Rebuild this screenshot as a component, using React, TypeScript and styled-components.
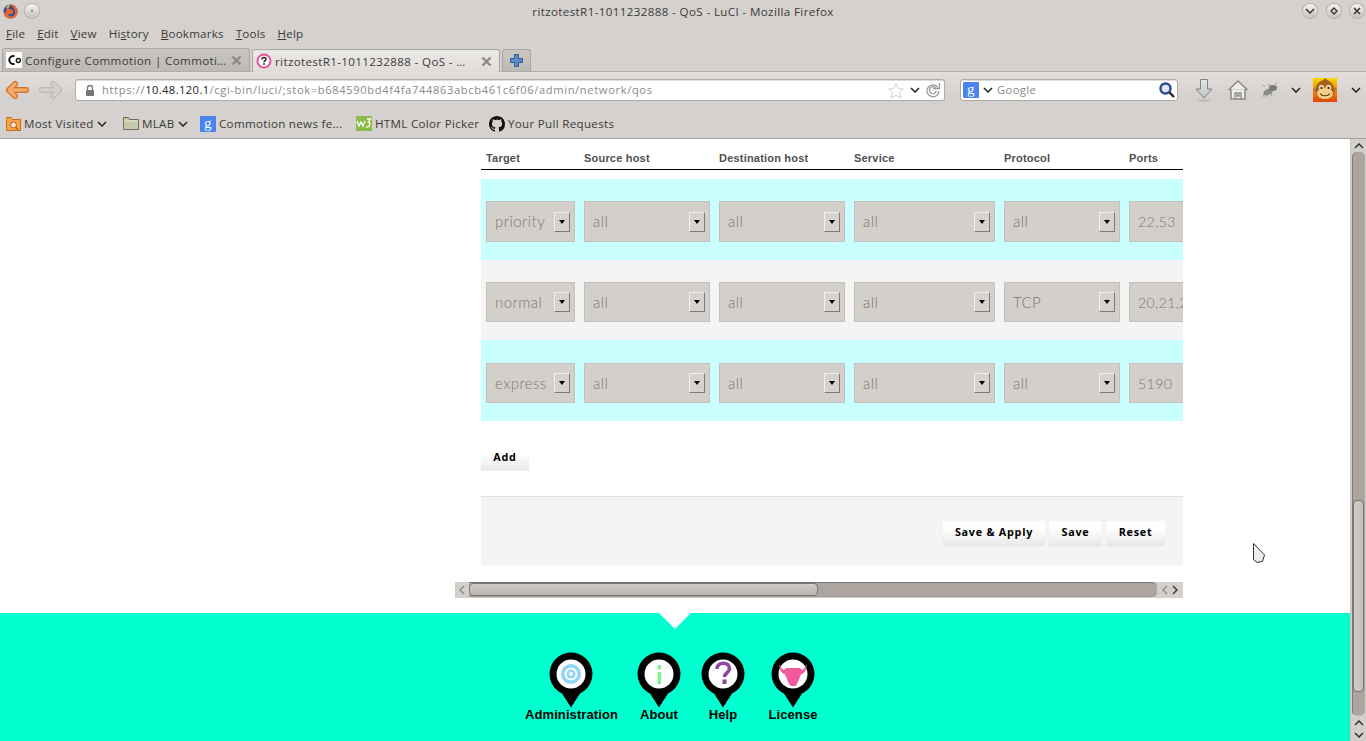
import React from "react";
import styled, { createGlobalStyle } from "styled-components";

const Global = createGlobalStyle`
  html, body { margin: 0; padding: 0; height: 741px; overflow: hidden; background: #d5d1ce; }
  * { box-sizing: border-box; }
`;

const uiFont = `"Open Sans", "Noto Sans", sans-serif`;

const Page = styled.div`
  width: 1366px; height: 741px; display: flex; flex-direction: column; position: relative; overflow: hidden;
  font-family: ${uiFont}; color: #3c3b37;
`;
const Spacer = styled.span<{ $w: number }>`width: ${p => p.$w}px; flex: none;`;

/* ---- browser chrome ---- */
const TitleBar = styled.div`
  height: 22px; display: flex; align-items: center; justify-content: space-between; padding: 0 3px 0 3px; background: #d5d1ce;
`;
const TitleText = styled.div`
  flex: 1; text-align: center; font-size: 11.6px; color: #3c3b37; letter-spacing: 0.37px;
`;
const TitleLeft = styled.div`display: flex; align-items: center; gap: 7px; width: 60px;`;
const TitleRight = styled.div`display: flex; align-items: center; gap: 9.5px; width: 60px; flex: none;`;
const Round = styled.div`
  width: 14px; height: 14px; border-radius: 50%; background: linear-gradient(#f6f5f4, #c4c0bc); box-shadow: 0 0 0 1px #b5b1ad;
  display: flex; align-items: center; justify-content: center; flex: none;
`;
const MenuBar = styled.div`
  height: 23px; display: flex; align-items: center; padding: 0 6px 1px; gap: 12px; font-size: 11.6px; color: #3c3b37; letter-spacing: 0.2px;
`;
const TabStrip = styled.div`
  height: 27px; display: flex; align-items: flex-end; padding-left: 2px; gap: 2px; border-bottom: 1px solid #b0aca8; background: #d5d1ce;
`;
const Tab = styled.div<{ $active?: boolean }>`
  width: 248px; height: 23px; display: flex; align-items: center; gap: 3px; padding: 0 6px 0 3px;
  border: 1px solid #aaa6a2; border-bottom: none; border-radius: 3px 3px 0 0; font-size: 11.6px; margin-bottom: ${p => (p.$active ? "-1px" : "0")};
  background: ${p => (p.$active ? "linear-gradient(#ebe9e7, #e0dcda)" : "linear-gradient(#c9c5c1, #bdb9b5)")};
  color: #3c3b37; white-space: nowrap;
`;
const TabLabel = styled.span`flex: 1; overflow: hidden; letter-spacing: 0.36px; line-height: 18px; padding-top: 2px;`;
const NewTab = styled.div`
  width: 29px; height: 22px; display: flex; align-items: center; justify-content: center;
  border: 1px solid #aaa6a2; border-bottom: none; border-radius: 3px 3px 0 0; background: linear-gradient(#cbc7c3, #bdb9b5);
`;
const NavBar = styled.div`
  height: 36px; display: flex; align-items: center; padding: 0 5px; background: linear-gradient(#e1dedc, #d5d1ce 70%);
`;
const BackWrap = styled.div`display: flex; align-items: center; gap: 10px; width: 70px;`;
const UrlBox = styled.div`
  width: 870px; height: 22px; background: #fff; border: 1px solid #aeaaa6; border-radius: 3px; display: flex; align-items: center; padding: 0 3px 0 8px; gap: 5px;
  font-size: 11.2px; color: #8a8a88; letter-spacing: 0.62px; box-shadow: inset 0 1px 0 #ddd;
  b { font-weight: 400; color: #222; letter-spacing: 0.4px; }
`;
const UrlText = styled.span`flex: 1; white-space: nowrap; padding: 0 0 2px 1px;`;
const SearchBox = styled.div`
  width: 218px; height: 22px; margin-left: 15px; background: #fff; border: 1px solid #aeaaa6; border-radius: 3px; display: flex; align-items: center; padding: 0 1px 0 2px;
  font-size: 11.2px; color: #8a8a88; letter-spacing: 0.4px; box-shadow: inset 0 1px 0 #ddd;
`;
const SearchText = styled.span`flex: 1; margin-left: 4px; padding-bottom: 2px;`;
const NavRight = styled.div`display: flex; align-items: center; margin-left: 16px;`;
const BookBar = styled.div`
  height: 31px; display: flex; align-items: center; padding: 1px 0 0 6px; background: #d5d1ce; border-bottom: 1px solid #a5a19d; font-size: 11.6px; letter-spacing: 0.3px; color: #3c3b37;
`;
const BookItem = styled.div<{ $w: number }>`display: flex; align-items: center; gap: 3px; width: ${p => p.$w}px; white-space: nowrap; flex: none;`;

/* ---- page ---- */
const Body = styled.div`flex: 1; display: flex; min-height: 0; background: #fff;`;
const Main = styled.div`flex: 1; display: flex; flex-direction: column; min-width: 0;`;
const Content = styled.div`height: 474px; padding-left: 455px; display: flex; flex-direction: column;`;
const Inner = styled.div`width: 728px; padding-left: 26px; display: flex; flex-direction: column; flex: none;`;
const HeadRow = styled.div`
  height: 31px; display: flex; align-items: flex-end; width: 702px; border-bottom: 1px solid #000; padding-bottom: 5px;
  font: bold 11px "Liberation Sans", Arial, sans-serif; color: #505050; margin-bottom: 9px; letter-spacing: 0.2px;
`;
const HeadCell = styled.div<{ $w: number }>`width: ${p => p.$w}px; padding-left: 5px; flex: none;`;
const Rows = styled.div`width: 702px; overflow: hidden;`;
const Row = styled.div<{ $bg: string; $h: number; $pt: number }>`
  height: ${p => p.$h}px; background: ${p => p.$bg}; display: flex; align-items: flex-start; padding-top: ${p => p.$pt}px;
`;
const Cell = styled.div<{ $w: number }>`width: ${p => p.$w}px; padding-left: 5px; flex: none;`;
const Sel = styled.div<{ $w: number; $h: number }>`
  width: ${p => p.$w}px; height: ${p => p.$h}px; background: #d3cfcb; border: 1px solid #c4c1bd; display: flex; align-items: center; padding: 0 4px 0 8px;
  font: 300 15px "Lato", "Open Sans", sans-serif; color: #7a7875; letter-spacing: 0.45px; white-space: nowrap; overflow: hidden;
`;
const SelText = styled.span`flex: 1; padding-bottom: 1px;`;
const SelBtn = styled.div`
  width: 16px; height: 20px; background: #d6d2cf; border: 1px solid; border-color: #f2f0ee #7d7a76 #7d7a76 #f2f0ee; display: flex; align-items: center; justify-content: center; flex: none;
  &::after { content: ""; border: 3.5px solid transparent; border-top: 4px solid #000; border-bottom: 0; }
`;
const Port = styled.div<{ $h: number }>`
  width: 70px; height: ${p => p.$h}px; background: #d3cfcb; border: 1px solid #c4c1bd; display: flex; align-items: center; padding: 0 0 0 8px;
  font: 300 14px "Lato", "Open Sans", sans-serif; color: #7a7875; letter-spacing: 0.45px; white-space: nowrap;
`;
const AddWrap = styled.div`padding-top: 25px; height: 75px; display: flex; align-items: flex-start;`;
const Btn = styled.button<{ $w: number }>`
  width: ${p => p.$w}px; height: 24px; border: 0; border-radius: 0; padding: 0 0 4px; background: linear-gradient(#fff 30%, #e9e9e9); box-shadow: 0 1px 1px rgba(0,0,0,0.06);
  font: bold 10.8px "Open Sans", "DejaVu Sans", sans-serif; letter-spacing: 0.75px; color: #000; flex: none; white-space: nowrap;
`;
const Actions = styled.div`
  width: 702px; height: 69px; background: #f4f4f4; border-top: 1px solid #e0e0e0; display: flex; justify-content: flex-end; padding: 24px 18px 0 0; gap: 4px;
`;
const HScroll = styled.div`
  width: 728px; height: 16px; margin-top: 17px; background: #d3cfcb; display: flex; align-items: center; flex: none;
`;
const HArrows = styled.div<{ $w: number }>`width: ${p => p.$w}px; display: flex; align-items: center; justify-content: center; gap: 4px; flex: none;`;
const HTrack = styled.div`
  flex: 1; height: 15px; margin-bottom: 1px; background: #aca5a0; border-top: 1px solid #777; border-radius: 0 5px 5px 0; display: flex; box-shadow: inset 0 -1px 0 #a09a95;
`;
const HThumb = styled.div`
  width: 349px; height: 13px; background: linear-gradient(#cfcbc7, #bbb6b1); border: 1px solid #77736f; border-radius: 4px;
`;
const Footer = styled.div`
  height: 128px; background: #00ffcf; position: relative; display: flex; justify-content: flex-start; padding-left: 525px;
`;
const Notch = styled.div`
  position: absolute; top: 0; left: 659px; width: 0; height: 0; border-left: 16px solid transparent; border-right: 16px solid transparent; border-top: 16px solid #fff;
`;
const PinItem = styled.div<{ $w: number; $ml: number }>`
  width: ${p => p.$w}px; margin-left: ${p => p.$ml}px; padding-top: 39px; display: flex; flex-direction: column; align-items: center; flex: none;
  font: bold 13px "Liberation Sans", Arial, sans-serif; color: #000; white-space: nowrap;
  svg { margin-left: -1px; }
`;
const PinLabel = styled.div`margin-top: -1px; line-height: 15px; letter-spacing: 0.1px;`;

const VScroll = styled.div`
  width: 16px; background: #d3cfcb; display: flex; flex-direction: column; align-items: center; flex: none; border-left: 1px solid #c8c4c0;
`;
const VArrow = styled.div<{ $h: number }>`height: ${p => p.$h}px; display: flex; align-items: center; justify-content: center; flex: none;`;
const VTrack = styled.div`
  height: 564px; flex: none; width: 13px; background: #aca5a0; border-radius: 5px; padding-top: 348px; display: flex; flex-direction: column; border-left: 1px solid #7f7a75; border-bottom: 1px solid #bbb;
`;
const VThumb = styled.div`
  height: 192px; background: linear-gradient(90deg, #cfcbc7, #c5c0bb); border: 1px solid #77736f; border-radius: 4px; margin: 0 1px 0 0;
`;
const Cursor = styled.svg`position: absolute; left: 1252px; top: 542px;`;

/* ---- drawings ---- */
const Firefox = () => (
  <svg width="15" height="15" viewBox="0 0 16 16">
    <circle cx="8" cy="8" r="7.5" fill="#2d4f9e" />
    <path d="M8 .5c3 0 7.5 2.5 7.5 7.5S12 15.5 8 15.5 .5 12.5 .8 7.5C1.5 9 2.5 9.5 3.5 9.5 3 6 4 3 5.5 2.5 5 4 6 5.5 8 5.5c2 0 3 1 3 2.5s-1.5 3-3.5 3C5.5 11 5 10 5 10c1 3 4 4 6 2.5 2.5-2 2.5-6-.5-9C9.5 2 8.5 1 8 .5Z" fill="#e8672a" />
    <path d="M3 4c1-1.8 3-3 5-3.2-1 1-1.5 2-1.5 3.2C5 4 4 4 3 4Z" fill="#f6b93b" />
  </svg>
);
const Dot = () => <svg width="4" height="4"><circle cx="2" cy="2" r="1" fill="#777" /></svg>;
const Chevron = ({ c = "#222" }: { c?: string }) => (
  <svg width="10" height="6" viewBox="0 0 10 6"><path d="M1 1l4 4 4-4" fill="none" stroke={c} strokeWidth="1.5" /></svg>
);
const WinDiamond = () => <svg width="8" height="8" viewBox="0 0 8 8"><path d="M4 1l3 3-3 3-3-3z" fill="none" stroke="#333" strokeWidth="1.3" /></svg>;
const WinX = () => <svg width="8" height="8" viewBox="0 0 8 8"><path d="M1 1l6 6M7 1l-6 6" stroke="#333" strokeWidth="1.5" /></svg>;
const CoIcon = () => (
  <svg width="16" height="16" viewBox="0 0 16 16">
    <rect width="16" height="16" fill="#fff" />
    <path d="M8.5 4.2A4 4 0 1 0 8.5 11.8" fill="none" stroke="#111" strokeWidth="2" />
    <circle cx="12.3" cy="8.5" r="2" fill="none" stroke="#111" strokeWidth="1.4" />
  </svg>
);
const TabClose = () => <svg width="13" height="13" viewBox="0 0 13 13"><path d="M2.5 2.5l8 8M10.5 2.5l-8 8" stroke="#8c8986" strokeWidth="2.4" /></svg>;
const QIcon = () => (
  <svg width="16" height="16" viewBox="0 0 16 16">
    <circle cx="8" cy="8" r="6.5" fill="#fff" stroke="#ea4f9b" strokeWidth="2" />
    <path d="M6 6.5c0-2.7 4-2.7 4-.3 0 1.5-2 1.5-2 3" fill="none" stroke="#222" strokeWidth="1.5" />
    <circle cx="8" cy="11" r="0.9" fill="#222" />
  </svg>
);
const Plus = () => (
  <svg width="15" height="15" viewBox="0 0 15 15">
    <path d="M5.5 1.5h4v4h4v4h-4v4h-4v-4h-4v-4h4z" fill="#5c8cc8" stroke="#2f5a99" />
  </svg>
);
const BackArrow = () => (
  <svg width="24" height="20" viewBox="0 0 24 20">
    <path d="M10 4 4 10l6 6M4 10h17" fill="none" stroke="#d06f28" strokeWidth="6" strokeLinecap="round" strokeLinejoin="round" />
    <path d="M10 4 4 10l6 6M4 10h17" fill="none" stroke="#f5a867" strokeWidth="3.6" strokeLinecap="round" strokeLinejoin="round" />
  </svg>
);
const FwdArrow = () => (
  <svg width="24" height="20" viewBox="0 0 24 20">
    <path d="M14 4l6 6-6 6M20 10H3" fill="none" stroke="#bdbab6" strokeWidth="6" strokeLinecap="round" strokeLinejoin="round" />
    <path d="M14 4l6 6-6 6M20 10H3" fill="none" stroke="#d2cfcc" strokeWidth="3.6" strokeLinecap="round" strokeLinejoin="round" />
  </svg>
);
const Lock = () => (
  <svg width="12" height="13" viewBox="0 0 12 13">
    <path d="M3.5 6V4a2.5 2.5 0 0 1 5 0v2" fill="none" stroke="#777" strokeWidth="1.3" />
    <rect x="2" y="6" width="8" height="6" rx="1" fill="#777" />
  </svg>
);
const Star = () => (
  <svg width="18" height="17" viewBox="0 0 18 17"><path d="M9 1.5l2.3 4.9 5.2.6-3.8 3.6 1 5.2L9 13.2 4.3 15.8l1-5.2L1.5 7l5.2-.6z" fill="#fff" stroke="#cfcfcf" /></svg>
);
const Reload = () => (
  <svg width="16" height="16" viewBox="0 0 16 16">
    <path d="M13 5.5A6 6 0 1 0 14 9" fill="none" stroke="#9a9a98" strokeWidth="1.3" />
    <path d="M10.5 5.7A3.5 3.5 0 1 0 11.3 9" fill="none" stroke="#9a9a98" strokeWidth="1.3" />
    <path d="M8 6.5h6.5V1" fill="none" stroke="#9a9a98" strokeWidth="1.3" />
  </svg>
);
const GIcon = () => (
  <svg width="16" height="16" viewBox="0 0 16 16">
    <rect width="16" height="16" rx="1" fill="#4a84f0" />
    <text x="8" y="11.5" textAnchor="middle" fontFamily="Liberation Serif, serif" fontSize="15" fill="#fff">g</text>
  </svg>
);
const Magnifier = () => (
  <svg width="18" height="18" viewBox="0 0 18 18">
    <circle cx="7.5" cy="7.5" r="5" fill="#dfe7f6" stroke="#2d4a94" strokeWidth="2.4" />
    <path d="M11.5 11.5l4.5 4.5" stroke="#222" strokeWidth="2.4" />
  </svg>
);
const Download = () => (
  <svg width="20" height="24" viewBox="0 0 20 24">
    <defs><linearGradient id="dl" x1="0" y1="0" x2="0" y2="1"><stop offset="0" stopColor="#e4e6e6" /><stop offset="1" stopColor="#bcc4c6" /></linearGradient></defs>
    <path d="M6.5 1.5h7V11H18L10 20 2 11h4.5z" fill="url(#dl)" stroke="#7f8282" strokeLinejoin="round" />
    <ellipse cx="10" cy="22.5" rx="7" ry="1" fill="#bbb7b3" />
  </svg>
);
const Home = () => (
  <svg width="22" height="22" viewBox="0 0 22 22">
    <path d="M1.5 11 11 2l9.5 9M4 10v10h14V10" fill="#eeece9" stroke="#8a8a88" strokeWidth="1.5" />
    <path d="M8 20v-6h2v3h2v-3h2v6" fill="none" stroke="#8a8a88" strokeWidth="1.3" />
  </svg>
);
const Bug = () => (
  <svg width="18" height="16" viewBox="0 0 18 16">
    <ellipse cx="7" cy="10" rx="5" ry="3" fill="#8a8a88" transform="rotate(-25 7 10)" />
    <ellipse cx="12" cy="6" rx="4" ry="3" fill="#7a7a78" />
    <path d="M3 13l-2 2M6 13l-1 2M10 11l1 3M4 5l-2-2M8 4V2M14 2l2-1" stroke="#999" strokeWidth="1" />
  </svg>
);
const Monkey = () => (
  <svg width="24" height="24" viewBox="0 0 24 24">
    <defs><linearGradient id="mk" x1="0" y1="0" x2="0" y2="1"><stop offset="0" stopColor="#f7d900" /><stop offset="1" stopColor="#e5420a" /></linearGradient></defs>
    <rect width="24" height="24" fill="url(#mk)" />
    <circle cx="2.5" cy="12" r="2.5" fill="#c97b2d" /><circle cx="21.5" cy="12" r="2.5" fill="#c97b2d" />
    <ellipse cx="12" cy="12" rx="9.5" ry="10" fill="#a2601f" />
    <path d="M12 0l3 3h-5z" fill="#a2601f" />
    <ellipse cx="12" cy="15.5" rx="8" ry="5.5" fill="#f3cf8a" />
    <circle cx="8.5" cy="9.5" r="2.8" fill="#f3cf8a" /><circle cx="15.5" cy="9.5" r="2.8" fill="#f3cf8a" />
    <circle cx="8.5" cy="10" r="1.1" fill="#123" /><circle cx="15.5" cy="10" r="1.1" fill="#123" />
    <path d="M7 15.5c2 3 8 3 10 0" fill="none" stroke="#6b3a0c" strokeWidth="1.2" />
  </svg>
);
const OrangeFolder = () => (
  <svg width="15" height="15" viewBox="0 0 15 15">
    <path d="M.5 3.5V1.5h5l1 2h8v11H.5z" fill="#f3a64c" stroke="#c96a14" />
    <circle cx="7.5" cy="9" r="3" fill="#fce6c8" stroke="#c2551a" />
    <path d="M9.5 11l2.5 2.5" stroke="#c2551a" strokeWidth="1.3" />
  </svg>
);
const Folder = () => (
  <svg width="16" height="15" viewBox="0 0 16 15">
    <path d="M.5 13.5v-12h5l1 2h9v10z" fill="#c7c8aa" stroke="#6b6d58" />
    <path d="M1 5h14" stroke="#e6e6d4" />
  </svg>
);
const W3 = () => (
  <svg width="16" height="15" viewBox="0 0 16 15">
    <rect width="16" height="15" fill="#8dbb4b" />
    <path d="M1 5l2 5 2-4 2 4 2-5" fill="none" stroke="#fff" strokeWidth="1.3" />
    <path d="M11 3h3.5l-2 3c2 0 2 6-2.5 5" fill="none" stroke="#fff" strokeWidth="1.3" />
  </svg>
);
const Github = () => (
  <svg width="16" height="16" viewBox="0 0 16 16">
    <path fill="#111" d="M8 0C3.58 0 0 3.58 0 8c0 3.54 2.29 6.53 5.47 7.59.4.07.55-.17.55-.38 0-.19-.01-.82-.01-1.49-2.01.37-2.53-.49-2.69-.94-.09-.23-.48-.94-.82-1.13-.28-.15-.68-.52-.01-.53.63-.01 1.08.58 1.23.82.72 1.21 1.87.87 2.33.66.07-.52.28-.87.51-1.07-1.78-.2-3.64-.89-3.64-3.95 0-.87.31-1.59.82-2.15-.08-.2-.36-1.02.08-2.12 0 0 .67-.21 2.2.82.64-.18 1.32-.27 2-.27s1.36.09 2 .27c1.53-1.04 2.2-.82 2.2-.82.44 1.1.16 1.92.08 2.12.51.56.82 1.27.82 2.15 0 3.07-1.87 3.75-3.65 3.95.29.25.54.73.54 1.48 0 1.07-.01 1.93-.01 2.2 0 .21.15.46.55.38A8.01 8.01 0 0 0 16 8c0-4.42-3.58-8-8-8Z" />
  </svg>
);
const Pin = ({ children }: { children: React.ReactNode }) => (
  <svg width="44" height="56" viewBox="0 0 44 56">
    <path d="M22 .5a21.5 21.5 0 0 1 9 41L22 55.5 13 41.5A21.5 21.5 0 0 1 22 .5Z" fill="#000" />
    <circle cx="22" cy="22" r="14.5" fill="#fff" />
    {children}
  </svg>
);
const ArrowL = ({ c = "#8f8b87" }: { c?: string }) => <svg width="6" height="10" viewBox="0 0 6 10"><path d="M5 1 1 5l4 4" fill="none" stroke={c} strokeWidth="1.4" /></svg>;
const ArrowR = ({ c = "#333" }: { c?: string }) => <svg width="6" height="10" viewBox="0 0 6 10"><path d="M1 1l4 4-4 4" fill="none" stroke={c} strokeWidth="1.4" /></svg>;
const ArrowU = () => <svg width="10" height="6" viewBox="0 0 10 6"><path d="M1 5l4-4 4 4" fill="none" stroke="#333" strokeWidth="1.5" /></svg>;
const ArrowD = () => <svg width="10" height="6" viewBox="0 0 10 6"><path d="M1 1l4 4 4-4" fill="none" stroke="#333" strokeWidth="1.5" /></svg>;

const heads: [string, number][] = [["Target", 98], ["Source host", 135], ["Destination host", 135], ["Service", 150], ["Protocol", 125], ["Ports", 59]];
const widths = [89, 126, 126, 141, 116];
const rows = [
  { bg: "#c9ffff", h: 81, pt: 22, ih: 41, vals: ["priority", "all", "all", "all", "all"], port: "22,53" },
  { bg: "#f4f4f4", h: 80, pt: 22, ih: 40, vals: ["normal", "all", "all", "all", "TCP"], port: "20,21,25,80,110" },
  { bg: "#c9ffff", h: 81, pt: 23, ih: 40, vals: ["express", "all", "all", "all", "all"], port: "5190" },
];
const menus: [string, string][] = [["F", "ile"], ["E", "dit"], ["V", "iew"], ["", "History"], ["B", "ookmarks"], ["T", "ools"], ["H", "elp"]];
const cellW = [98, 135, 135, 150, 125];

export default function App() {
  return (
    <Page>
      <Global />
      <TitleBar>
        <TitleLeft><Firefox /><Round><Dot /></Round></TitleLeft>
        <TitleText>ritzotestR1-1011232888 - QoS - LuCI - Mozilla Firefox</TitleText>
        <TitleRight>
          <Round><Chevron c="#333" /></Round>
          <Round><WinDiamond /></Round>
          <Round><WinX /></Round>
        </TitleRight>
      </TitleBar>
      <MenuBar>
        {menus.map(([a, b]) => (
          <span key={b}>{a ? <><u>{a}</u>{b}</> : <>Hi<u>s</u>tory</>}</span>
        ))}
      </MenuBar>
      <TabStrip>
        <Tab><CoIcon /><TabLabel>Configure Commotion | Commoti…</TabLabel><TabClose /></Tab>
        <Tab $active><QIcon /><TabLabel>ritzotestR1-1011232888 - QoS - …</TabLabel><TabClose /></Tab>
        <NewTab><Plus /></NewTab>
      </TabStrip>
      <NavBar>
        <BackWrap><BackArrow /><FwdArrow /></BackWrap>
        <UrlBox>
          <Lock />
          <UrlText>https://<b>10.48.120.1</b>/cgi-bin/luci/;stok=b684590bd4f4fa744863abcb461c6f06/admin/network/qos</UrlText>
          <Star />
          <Chevron />
          <Reload />
        </UrlBox>
        <SearchBox>
          <GIcon />
          <Spacer $w={4} />
          <Chevron />
          <SearchText>Google</SearchText>
          <Magnifier />
        </SearchBox>
        <NavRight>
          <Download />
          <Spacer $w={13} />
          <Home />
          <Spacer $w={12} />
          <Bug />
          <Spacer $w={12} />
          <Chevron />
          <Spacer $w={12} />
          <Monkey />
          <Spacer $w={14} />
          <Chevron />
        </NavRight>
      </NavBar>
      <BookBar>
        <BookItem $w={117}><OrangeFolder />Most Visited<Chevron /></BookItem>
        <BookItem $w={77}><Folder />MLAB<Chevron /></BookItem>
        <BookItem $w={156}><GIcon />Commotion news fe...</BookItem>
        <BookItem $w={133}><W3 />HTML Color Picker</BookItem>
        <BookItem $w={130}><Github />Your Pull Requests</BookItem>
      </BookBar>
      <Body>
        <Main>
          <Content>
            <Inner>
              <HeadRow>{heads.map(([t, w]) => <HeadCell key={t} $w={w}>{t}</HeadCell>)}</HeadRow>
              <Rows>
                {rows.map((r, i) => (
                  <Row key={i} $bg={r.bg} $h={r.h} $pt={r.pt}>
                    {r.vals.map((v, j) => (
                      <Cell key={j} $w={cellW[j]}>
                        <Sel $w={widths[j]} $h={r.ih}><SelText>{v}</SelText><SelBtn /></Sel>
                      </Cell>
                    ))}
                    <Cell $w={59}><Port $h={r.ih}>{r.port}</Port></Cell>
                  </Row>
                ))}
              </Rows>
              <AddWrap><Btn $w={48}>Add</Btn></AddWrap>
              <Actions>
                <Btn $w={102}>Save &amp; Apply</Btn>
                <Btn $w={53}>Save</Btn>
                <Btn $w={59}>Reset</Btn>
              </Actions>
            </Inner>
            <HScroll>
              <HArrows $w={14}><ArrowL /></HArrows>
              <HTrack><HThumb /></HTrack>
              <HArrows $w={26}><ArrowL /><ArrowR /></HArrows>
            </HScroll>
          </Content>
          <Footer>
            <Notch />
            <PinItem $w={93} $ml={0}>
              <Pin>
                <circle cx="22" cy="22" r="10" fill="#8fd4f8" /><circle cx="22" cy="22" r="6.5" fill="#fff" /><circle cx="22" cy="22" r="4.5" fill="#8fd4f8" /><circle cx="22" cy="22" r="2" fill="#fff" />
              </Pin>
              <PinLabel>Administration</PinLabel>
            </PinItem>
            <PinItem $w={44} $ml={19}>
              <Pin>
                <rect x="20.5" y="20" width="3.5" height="12" fill="#7df58f" /><rect x="20.5" y="13" width="3.5" height="4.5" fill="#7df58f" />
              </Pin>
              <PinLabel>About</PinLabel>
            </PinItem>
            <PinItem $w={44} $ml={20}>
              <Pin>
                <path d="M16 17c0-7.5 12.5-7.5 12.5-.5 0 4.5-5 4-5 8.5" fill="none" stroke="#8b4a9e" strokeWidth="3.6" />
                <rect x="21.5" y="27.5" width="4" height="4.5" fill="#8b4a9e" />
              </Pin>
              <PinLabel>Help</PinLabel>
            </PinItem>
            <PinItem $w={44} $ml={26}>
              <Pin>
                <path d="M8.5 12C8 17 10 21 14 22.5L18 32C19 35 25 35 26 32L30 22.5C34 21 36 17 35.5 12C34.5 15 33 17.5 31 18L29 16H15L13 18C11 17.5 9.5 15 8.5 12Z" fill="#f25a9d" />
              </Pin>
              <PinLabel>License</PinLabel>
            </PinItem>
          </Footer>
        </Main>
        <VScroll>
          <VArrow $h={13}><ArrowU /></VArrow>
          <VTrack><VThumb /></VTrack>
          <VArrow $h={13}><ArrowU /></VArrow>
          <VArrow $h={12}><ArrowD /></VArrow>
        </VScroll>
      </Body>
      <Cursor width="14" height="22" viewBox="0 0 14 22">
        <path d="M1.5 1.5 12.5 13l-2 6.5-5.5 1-3.500-3z" fill="#eee" stroke="#333" />
      </Cursor>
    </Page>
  );
}
